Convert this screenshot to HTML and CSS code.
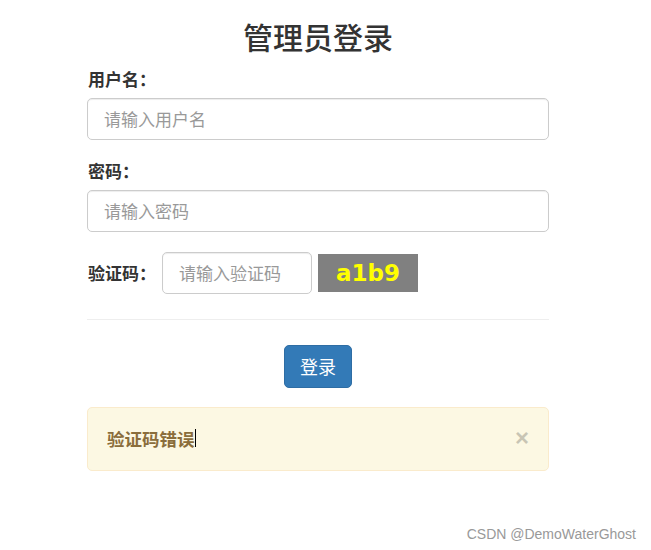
FILE: index.html
```html
<!DOCTYPE html>
<html lang="zh-CN">
<head>
<meta charset="utf-8">
<title>管理员登录</title>
<link rel="stylesheet" href="styles.css">
</head>
<body>
<div class="wrap">
  <h1 class="title">管理员登录</h1>
  <form class="form">
    <div class="group">
      <label class="label">用户名：</label>
      <input class="input" type="text" placeholder="请输入用户名">
    </div>
    <div class="group">
      <label class="label">密码：</label>
      <input class="input" type="password" placeholder="请输入密码">
    </div>
    <div class="captcha-row">
      <label class="label">验证码：</label>
      <input class="input input-code" type="text" placeholder="请输入验证码">
      <div class="captcha">a1b9</div>
    </div>
    <hr class="divider">
    <div class="actions">
      <button type="button" class="btn">登录</button>
    </div>
    <div class="alert">
      <span class="alert-text">验证码错误<span class="caret"></span></span>
      <span class="close">×</span>
    </div>
  </form>
</div>
<div class="watermark">CSDN @DemoWaterGhost</div>
</body>
</html>
```
FILE: styles.css
```css
* { box-sizing: border-box; }
html, body { margin: 0; padding: 0; background: #fff; }
body {
  font-family: "Liberation Sans", "Noto Sans CJK SC", sans-serif;
  color: #333;
  width: 651px;
  height: 550px;
  position: relative;
  overflow: hidden;
}
.wrap {
  width: 462px;
  margin-left: 87px;
}
.title {
  margin: 18px 0 0;
  font-size: 30px;
  line-height: 36px;
  font-weight: 500;
  text-align: center;
  color: #333;
  font-family: "Noto Sans CJK SC", sans-serif;
}
.form { margin: 0; padding: 0; }
.group { margin-top: 14px; }
.group + .group { margin-top: 20px; }
.label {
  display: block;
  font-family: "Noto Sans CJK SC", sans-serif;
  font-weight: 700;
  font-size: 17px;
  line-height: 22px;
  padding-left: 1px;
  color: #333;
}
.group .label { margin-bottom: 8px; }
.input {
  display: block;
  width: 100%;
  height: 42px;
  padding: 0 16px 2px;
  font-size: 17px;
  font-family: "Noto Sans CJK SC", sans-serif;
  color: #555;
  border: 1px solid #ccc;
  border-radius: 5px;
  box-shadow: inset 0 1px 1px rgba(0,0,0,.075);
  outline: none;
  background: #fff;
}
.input::placeholder { color: #999; }
.captcha-row {
  margin-top: 20px;
  display: flex;
  align-items: center;
}
.captcha-row .label { margin-right: 6px; }
.input-code {
  width: 150px;
  margin-right: 6px;
}
.captcha {
  width: 100px;
  height: 38px;
  background: #808080;
  color: #ffff00;
  font-family: "DejaVu Sans", sans-serif;
  font-weight: 700;
  font-size: 23px;
  line-height: 38px;
  text-align: center;
}
.divider {
  margin: 25px 0 0;
  border: 0;
  border-top: 1px solid #eee;
  height: 0;
}
.actions {
  display: flex;
  justify-content: center;
  margin-top: 25px;
}
.btn {
  width: 68px;
  height: 43px;
  background: #337ab7;
  border: 1px solid #2e6da4;
  border-radius: 5px;
  color: #fff;
  font-family: "Noto Sans CJK SC", sans-serif;
  font-size: 18px;
  padding: 0 0 2px;
}
.alert {
  margin-top: 19px;
  height: 64px;
  background: #fcf8e3;
  border: 1px solid #faebcc;
  border-radius: 5px;
  color: #8a6d3b;
  display: flex;
  align-items: center;
  justify-content: space-between;
  padding: 0 19px 2px 19px;
}
.alert-text {
  font-family: "Noto Sans CJK SC", sans-serif;
  font-weight: 700;
  font-size: 17.5px;
  display: inline-flex;
  align-items: center;
}
.caret {
  display: inline-block;
  width: 1px;
  height: 18px;
  background: #000;
}
.close {
  font-family: "Liberation Sans", sans-serif;
  font-size: 24px;
  font-weight: 700;
  color: #000;
  opacity: .2;
  line-height: 1;
}
.watermark {
  position: absolute;
  right: 15px;
  top: 526px;
  font-family: "Liberation Sans", sans-serif;
  font-size: 14px;
  color: #999;
}
```
